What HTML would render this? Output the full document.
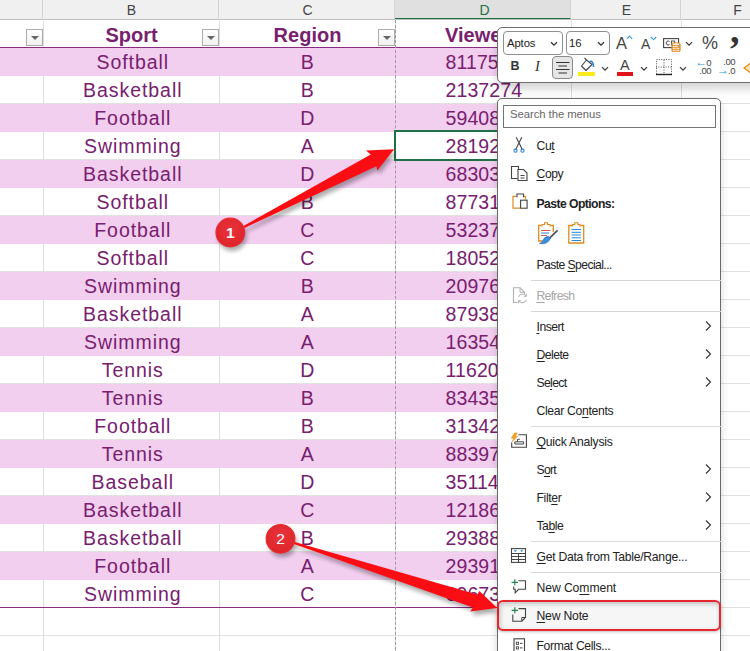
<!DOCTYPE html>
<html><head><meta charset="utf-8"><title>Excel</title>
<style>
*{box-sizing:border-box;margin:0;padding:0}
html,body{width:750px;height:651px;overflow:hidden;background:#fff;font-family:"Liberation Sans",sans-serif}
#sheet{position:absolute;left:0;top:0;width:750px;height:651px;overflow:hidden;background:#fff}
.colhdr{position:absolute;top:0;height:19px;background:#f0f0f0;color:#444;font-size:14px;text-align:center;line-height:21px;padding-left:2px;border-right:1px solid #d4d4d4}
.hline{position:absolute;left:0;width:750px;height:1px;background:#e1e1e1}
.vline{position:absolute;top:19px;width:1px;height:640px;background:#dedede}
.band{position:absolute;left:0;width:571px;height:28px;background:#f2ceef}
.cell{position:absolute;height:28px;line-height:29px;font-size:19.5px;color:#78206e;letter-spacing:.45px;white-space:nowrap}
.c{text-align:center}
.hd{font-weight:bold;font-size:20px;letter-spacing:0;line-height:30px}
.fb{position:absolute;width:17px;height:17px;top:29px;border:1px solid #ababab;background:linear-gradient(#fff,#f1f1f1)}
.fb:after{content:"";position:absolute;left:3.5px;top:6px;border:4px solid transparent;border-top:4px solid #666;border-bottom:0}
.tb{position:absolute;left:497px;top:27px;width:270px;height:56px;background:#fff;border:1px solid #6e6e6e;border-radius:5px;box-shadow:0 6px 8px rgba(0,0,0,.17)}
.menu{position:absolute;left:497px;top:98px;width:224px;height:580px;background:#fff;border:1px solid #6a6a6a;border-radius:5px;box-shadow:0 3px 8px rgba(0,0,0,.16)}
.mi{position:absolute;left:38.5px;font-size:12.2px;color:#222;height:16px;line-height:16px;white-space:nowrap;letter-spacing:-.4px}
.mi u{text-decoration-thickness:1px;text-underline-offset:1.5px}
.sep{position:absolute;left:33px;width:190px;height:1px;background:#d8d8d8}
.chev{position:absolute;left:205px;width:10px;height:12px}
.ico{position:absolute}
.abs{position:absolute}
</style></head><body><div id="sheet">

<div class="colhdr" style="left:0px;width:43px"></div>
<div class="colhdr" style="left:43px;width:176px">B</div>
<div class="colhdr" style="left:219px;width:176px">C</div>
<div class="colhdr" style="left:395px;width:176px;background:#e0e0e0;color:#1f7044;border-bottom:2px solid #1e7145;height:20px;padding-left:4px">D</div>
<div class="colhdr" style="left:571px;width:110px">E</div>
<div class="colhdr" style="left:681px;width:112px">F</div>
<div class="hline" style="top:19px;background:#bdbdbd"></div>
<div class="hline" style="top:47px"></div>
<div class="hline" style="top:75px"></div>
<div class="hline" style="top:103px"></div>
<div class="hline" style="top:131px"></div>
<div class="hline" style="top:159px"></div>
<div class="hline" style="top:187px"></div>
<div class="hline" style="top:215px"></div>
<div class="hline" style="top:243px"></div>
<div class="hline" style="top:271px"></div>
<div class="hline" style="top:299px"></div>
<div class="hline" style="top:327px"></div>
<div class="hline" style="top:355px"></div>
<div class="hline" style="top:383px"></div>
<div class="hline" style="top:411px"></div>
<div class="hline" style="top:439px"></div>
<div class="hline" style="top:467px"></div>
<div class="hline" style="top:495px"></div>
<div class="hline" style="top:523px"></div>
<div class="hline" style="top:551px"></div>
<div class="hline" style="top:579px"></div>
<div class="hline" style="top:607px"></div>
<div class="hline" style="top:635px"></div>
<div class="hline" style="top:663px"></div>
<div class="vline" style="left:43px"></div>
<div class="vline" style="left:219px"></div>
<div class="vline" style="left:395px"></div>
<div class="vline" style="left:571px"></div>
<div class="vline" style="left:681px"></div>
<div class="band" style="top:48px"></div>
<div class="band" style="top:104px"></div>
<div class="band" style="top:160px"></div>
<div class="band" style="top:216px"></div>
<div class="band" style="top:272px"></div>
<div class="band" style="top:328px"></div>
<div class="band" style="top:384px"></div>
<div class="band" style="top:440px"></div>
<div class="band" style="top:496px"></div>
<div class="band" style="top:552px"></div>
<div class="cell c hd" style="left:43px;width:177px;top:20px">Sport</div>
<div class="cell c hd" style="left:219px;width:177px;top:20px">Region</div>
<div class="cell hd" style="left:445px;top:20px">Viewers</div>
<div class="fb" style="left:26px"></div>
<div class="fb" style="left:202px"></div>
<div class="fb" style="left:378px"></div>
<div class="abs" style="left:0;top:46.5px;width:571px;height:1.5px;background:#8a2a80"></div>
<div class="cell c" style="left:43.75px;width:178px;letter-spacing:.95px;top:48px">Softball</div>
<div class="cell c" style="left:219px;width:177px;top:48px">B</div>
<div class="cell" style="left:445.5px;letter-spacing:.1px;top:48px">81175</div>
<div class="cell c" style="left:43.75px;width:178px;letter-spacing:.95px;top:76px">Basketball</div>
<div class="cell c" style="left:219px;width:177px;top:76px">B</div>
<div class="cell" style="left:445.5px;letter-spacing:.1px;top:76px">2137274</div>
<div class="cell c" style="left:43.75px;width:178px;letter-spacing:.95px;top:104px">Football</div>
<div class="cell c" style="left:219px;width:177px;top:104px">D</div>
<div class="cell" style="left:445.5px;letter-spacing:.1px;top:104px">59408</div>
<div class="cell c" style="left:43.75px;width:178px;letter-spacing:.95px;top:132px">Swimming</div>
<div class="cell c" style="left:219px;width:177px;top:132px">A</div>
<div class="cell" style="left:445.5px;letter-spacing:.1px;top:132px">28192</div>
<div class="cell c" style="left:43.75px;width:178px;letter-spacing:.95px;top:160px">Basketball</div>
<div class="cell c" style="left:219px;width:177px;top:160px">D</div>
<div class="cell" style="left:445.5px;letter-spacing:.1px;top:160px">68303</div>
<div class="cell c" style="left:43.75px;width:178px;letter-spacing:.95px;top:188px">Softball</div>
<div class="cell c" style="left:219px;width:177px;top:188px">B</div>
<div class="cell" style="left:445.5px;letter-spacing:.1px;top:188px">87731</div>
<div class="cell c" style="left:43.75px;width:178px;letter-spacing:.95px;top:216px">Football</div>
<div class="cell c" style="left:219px;width:177px;top:216px">C</div>
<div class="cell" style="left:445.5px;letter-spacing:.1px;top:216px">53237</div>
<div class="cell c" style="left:43.75px;width:178px;letter-spacing:.95px;top:244px">Softball</div>
<div class="cell c" style="left:219px;width:177px;top:244px">C</div>
<div class="cell" style="left:445.5px;letter-spacing:.1px;top:244px">18052</div>
<div class="cell c" style="left:43.75px;width:178px;letter-spacing:.95px;top:272px">Swimming</div>
<div class="cell c" style="left:219px;width:177px;top:272px">B</div>
<div class="cell" style="left:445.5px;letter-spacing:.1px;top:272px">20976</div>
<div class="cell c" style="left:43.75px;width:178px;letter-spacing:.95px;top:300px">Basketball</div>
<div class="cell c" style="left:219px;width:177px;top:300px">A</div>
<div class="cell" style="left:445.5px;letter-spacing:.1px;top:300px">87938</div>
<div class="cell c" style="left:43.75px;width:178px;letter-spacing:.95px;top:328px">Swimming</div>
<div class="cell c" style="left:219px;width:177px;top:328px">A</div>
<div class="cell" style="left:445.5px;letter-spacing:.1px;top:328px">16354</div>
<div class="cell c" style="left:43.75px;width:178px;letter-spacing:.95px;top:356px">Tennis</div>
<div class="cell c" style="left:219px;width:177px;top:356px">D</div>
<div class="cell" style="left:445.5px;letter-spacing:.1px;top:356px">11620</div>
<div class="cell c" style="left:43.75px;width:178px;letter-spacing:.95px;top:384px">Tennis</div>
<div class="cell c" style="left:219px;width:177px;top:384px">B</div>
<div class="cell" style="left:445.5px;letter-spacing:.1px;top:384px">83435</div>
<div class="cell c" style="left:43.75px;width:178px;letter-spacing:.95px;top:412px">Football</div>
<div class="cell c" style="left:219px;width:177px;top:412px">B</div>
<div class="cell" style="left:445.5px;letter-spacing:.1px;top:412px">31342</div>
<div class="cell c" style="left:43.75px;width:178px;letter-spacing:.95px;top:440px">Tennis</div>
<div class="cell c" style="left:219px;width:177px;top:440px">A</div>
<div class="cell" style="left:445.5px;letter-spacing:.1px;top:440px">88397</div>
<div class="cell c" style="left:43.75px;width:178px;letter-spacing:.95px;top:468px">Baseball</div>
<div class="cell c" style="left:219px;width:177px;top:468px">D</div>
<div class="cell" style="left:445.5px;letter-spacing:.1px;top:468px">35114</div>
<div class="cell c" style="left:43.75px;width:178px;letter-spacing:.95px;top:496px">Basketball</div>
<div class="cell c" style="left:219px;width:177px;top:496px">C</div>
<div class="cell" style="left:445.5px;letter-spacing:.1px;top:496px">12186</div>
<div class="cell c" style="left:43.75px;width:178px;letter-spacing:.95px;top:524px">Basketball</div>
<div class="cell c" style="left:219px;width:177px;top:524px">B</div>
<div class="cell" style="left:445.5px;letter-spacing:.1px;top:524px">29388</div>
<div class="cell c" style="left:43.75px;width:178px;letter-spacing:.95px;top:552px">Football</div>
<div class="cell c" style="left:219px;width:177px;top:552px">A</div>
<div class="cell" style="left:445.5px;letter-spacing:.1px;top:552px">29391</div>
<div class="cell c" style="left:43.75px;width:178px;letter-spacing:.95px;top:580px">Swimming</div>
<div class="cell c" style="left:219px;width:177px;top:580px">C</div>
<div class="cell" style="left:445.5px;letter-spacing:.1px;top:580px">69673</div>
<div class="abs" style="left:0;top:606.5px;width:571px;height:1.2px;background:#8a2a80"></div>
<div class="abs" style="left:395px;top:20px;width:0;height:640px;border-left:1px dashed #9a9a9a"></div>
<div class="abs" style="left:394px;top:130px;width:178px;height:31px;border:2px solid #1e7145"></div>
</div><!-- mini toolbar -->
<div class="tb">
  <div class="abs" style="left:5px;top:3px;width:60px;height:24px;border:1px solid #8f8f8f;border-radius:4px"></div>
  <div class="abs" style="left:9px;top:7px;font-size:11.3px;color:#222;line-height:16px;letter-spacing:-.1px">Aptos</div>
  <svg class="abs" style="left:52px;top:12.500px" width="8" height="6" viewBox="0 0 8 6"><path d="M1 1.200 L4 4.200 L7 1.200" fill="none" stroke="#333" stroke-width="1.3"/></svg>
  <div class="abs" style="left:68px;top:3px;width:44px;height:24px;border:1px solid #8f8f8f;border-radius:4px"></div>
  <div class="abs" style="left:71px;top:7px;font-size:11.3px;color:#222;line-height:16px">16</div>
  <svg class="abs" style="left:99px;top:12.500px" width="8" height="6" viewBox="0 0 8 6"><path d="M1 1.200 L4 4.200 L7 1.200" fill="none" stroke="#333" stroke-width="1.3"/></svg>
  <div class="abs" style="left:118px;top:4.500px;font-size:16.500px;color:#444;line-height:20px">A</div>
  <svg class="abs" style="left:128px;top:7px" width="7" height="5" viewBox="0 0 7 5"><path d="M.8 3.800 L3.500 1.200 L6.200 3.800" fill="none" stroke="#2b9ad6" stroke-width="1.100"/></svg>
  <div class="abs" style="left:143px;top:6.500px;font-size:14px;color:#444;line-height:18px">A</div>
  <svg class="abs" style="left:152px;top:8px" width="7" height="5" viewBox="0 0 7 5"><path d="M.8 1 L3.500 3.600 L6.200 1" fill="none" stroke="#2b9ad6" stroke-width="1.100"/></svg>
  <!-- accounting icon -->
  <svg class="abs" style="left:165px;top:10px" width="18" height="14" viewBox="0 0 18 14"><rect x=".6" y=".6" width="15" height="9" fill="#fff" stroke="#444" stroke-width="1.100"/><path d="M6.500 3.500 a2 2 0 1 0 0 3" fill="none" stroke="#444" stroke-width="1"/><rect x="8.500" y="3" width="3" height="4" fill="none" stroke="#444" stroke-width=".9"/><path d="M9 8.500 v4 a4 1.400 0 0 0 8 0 v-4" fill="#fff" stroke="#e08a1e" stroke-width="1.100"/><ellipse cx="13" cy="6.300" rx="4" ry="1.500" fill="#fff" stroke="#e08a1e" stroke-width="1.100"/><path d="M9 8.500 a4 1.400 0 0 0 8 0 M9 6.300 v2.200 M17 6.300 v2.200 M9 10.500 a4 1.400 0 0 0 8 0" fill="none" stroke="#e08a1e" stroke-width="1.100"/></svg>
  <svg class="abs" style="left:187px;top:13px" width="8" height="6" viewBox="0 0 8 6"><path d="M1 1.200 L4 4.200 L7 1.200" fill="none" stroke="#333" stroke-width="1.200"/></svg>
  <div class="abs" style="left:204px;top:4px;font-size:18px;color:#444;line-height:22px">%</div>
  <div class="abs" style="left:232px;top:-18px;font-size:38px;font-weight:bold;color:#333;line-height:40px;font-family:'Liberation Serif',serif">,</div>
  <!-- row 2 -->
  <div class="abs" style="left:12.500px;top:30px;font-size:12.500px;font-weight:bold;color:#333;line-height:16px">B</div>
  <div class="abs" style="left:37px;top:29px;font-size:14.500px;font-style:italic;color:#333;line-height:18px;font-family:'Liberation Serif',serif">I</div>
  <div class="abs" style="left:54px;top:28px;width:21px;height:23px;border:1px solid #8a8a8a;border-radius:4px;background:#e6e6e6"></div>
  <svg class="abs" style="left:58px;top:33px" width="14" height="14" viewBox="0 0 14 14"><path d="M0 1.500h13.500M2.500 5h8.500M0 8.500h13.500M2.500 12h8.500" stroke="#333" stroke-width="1"/></svg>
  <!-- fill -->
  <svg class="abs" style="left:80px;top:29px" width="18" height="15" viewBox="0 0 18 15"><path d="M6.500 1 L8.500 3 L3.500 9 L8 13.500 L14 7.500 L8.500 3" fill="#fff" stroke="#444" stroke-width="1.100" stroke-linejoin="round"/><path d="M11.500 4.500 q4 -1 4 5.500" fill="none" stroke="#2b7cd3" stroke-width="1.500"/></svg>
  <div class="abs" style="left:80px;top:44px;width:17px;height:4px;background:#fbea1c"></div>
  <svg class="abs" style="left:103px;top:38px" width="8" height="6" viewBox="0 0 8 6"><path d="M1 1.200 L4 4.200 L7 1.200" fill="none" stroke="#333" stroke-width="1.200"/></svg>
  <div class="abs" style="left:122px;top:29px;font-size:14.500px;color:#444;line-height:16px">A</div>
  <div class="abs" style="left:119px;top:44px;width:16px;height:4px;background:#e0141a"></div>
  <svg class="abs" style="left:142px;top:38px" width="8" height="6" viewBox="0 0 8 6"><path d="M1 1.200 L4 4.200 L7 1.200" fill="none" stroke="#333" stroke-width="1.200"/></svg>
  <!-- borders -->
  <svg class="abs" style="left:158px;top:31px" width="16" height="17" viewBox="0 0 16 17"><rect x=".5" y=".5" width="15" height="15" fill="none" stroke="#555" stroke-dasharray="1 1.400"/><path d="M8 1v15M0 8h16" stroke="#555" stroke-dasharray="1 1.400"/><path d="M0 15.500h16" stroke="#222" stroke-width="1.400"/></svg>
  <svg class="abs" style="left:181px;top:38px" width="8" height="6" viewBox="0 0 8 6"><path d="M1 1.200 L4 4.200 L7 1.200" fill="none" stroke="#333" stroke-width="1.200"/></svg>
  <!-- inc dec -->
  <div class="abs" style="left:193px;top:30px;width:20px;text-align:right;font-size:9.500px;color:#444;line-height:8px;letter-spacing:-.5px"><span style="color:#2b9ad6;font-size:12px;letter-spacing:-1px">&#8592;</span>0<br>.00</div>
  <div class="abs" style="left:216px;top:30px;width:21px;text-align:right;font-size:9.500px;color:#444;line-height:8px;letter-spacing:-.5px">.00<br><span style="color:#2b9ad6;font-size:12px;letter-spacing:-1px">&#8594;</span>.0</div>
  <svg class="abs" style="left:245px;top:32px" width="10" height="16" viewBox="0 0 10 16"><path d="M1 8 L9 2 V14 Z" fill="#fbe3b5" stroke="#e08a1e" stroke-width="1.200"/></svg>
</div>

<!-- context menu -->
<div class="menu">
  <div class="abs" style="left:5px;top:5.500px;width:213px;height:23.500px;border:1px solid #747474;border-radius:0"></div>
  <div class="abs" style="left:12px;top:7px;font-size:11.3px;color:#666;line-height:16px;letter-spacing:-.05px">Search the menus</div>

  <div class="mi" style="top:39px;letter-spacing:-0.39px">Cu<u>t</u></div>
  <div class="mi" style="top:67px;letter-spacing:-0.42px"><u>C</u>opy</div>
  <div class="mi" style="top:96.700px;font-weight:bold;letter-spacing:-0.57px">Paste Options:</div>
  <div class="mi" style="top:158px;letter-spacing:-0.59px">Paste <u>S</u>pecial...</div>
  <div class="sep" style="top:181px"></div>
  <div class="mi" style="top:189px;color:#a6a6a6;letter-spacing:-0.70px"><u>R</u>efresh</div>
  <div class="sep" style="top:212px"></div>
  <div class="mi" style="top:220px;letter-spacing:-0.51px"><u>I</u>nsert</div>
  <div class="mi" style="top:248px;letter-spacing:-0.55px"><u>D</u>elete</div>
  <div class="mi" style="top:276px;letter-spacing:-0.67px">Se<u>l</u>ect</div>
  <div class="mi" style="top:304px;letter-spacing:-0.32px">Clear Co<u>n</u>tents</div>
  <div class="sep" style="top:327px"></div>
  <div class="mi" style="top:335px;letter-spacing:-0.22px"><u>Q</u>uick Analysis</div>
  <div class="mi" style="top:363px;letter-spacing:-0.70px">S<u>o</u>rt</div>
  <div class="mi" style="top:391px;letter-spacing:-0.38px">Filt<u>e</u>r</div>
  <div class="mi" style="top:419px;letter-spacing:-0.48px">Ta<u>b</u>le</div>
  <div class="sep" style="top:442px"></div>
  <div class="mi" style="top:450px;letter-spacing:-0.27px"><u>G</u>et Data from Table/Range...</div>
  <div class="sep" style="top:473px"></div>
  <div class="mi" style="top:481px;letter-spacing:-0.09px">New Co<u>m</u>ment</div>
  <div class="abs" style="left:0;top:502px;width:222px;height:29px;background:#f6f6f6"></div>
  <div class="mi" style="top:509px;letter-spacing:-0.20px"><u>N</u>ew Note</div>
  <div class="mi" style="top:539px;letter-spacing:-0.37px"><u>F</u>ormat Cells...</div>

  <!-- chevrons -->
  <svg class="chev" style="top:221px" viewBox="0 0 10 12"><path d="M3 1.5 L7.5 6 L3 10.5" fill="none" stroke="#333" stroke-width="1.1"/></svg>
  <svg class="chev" style="top:249px" viewBox="0 0 10 12"><path d="M3 1.5 L7.5 6 L3 10.5" fill="none" stroke="#333" stroke-width="1.1"/></svg>
  <svg class="chev" style="top:277px" viewBox="0 0 10 12"><path d="M3 1.5 L7.5 6 L3 10.5" fill="none" stroke="#333" stroke-width="1.1"/></svg>
  <svg class="chev" style="top:364px" viewBox="0 0 10 12"><path d="M3 1.5 L7.5 6 L3 10.5" fill="none" stroke="#333" stroke-width="1.1"/></svg>
  <svg class="chev" style="top:392px" viewBox="0 0 10 12"><path d="M3 1.5 L7.5 6 L3 10.5" fill="none" stroke="#333" stroke-width="1.1"/></svg>
  <svg class="chev" style="top:420px" viewBox="0 0 10 12"><path d="M3 1.5 L7.5 6 L3 10.5" fill="none" stroke="#333" stroke-width="1.1"/></svg>

</div>

<!-- menu icons (page coordinates) -->
<svg class="abs" style="left:0;top:0" width="750" height="651" viewBox="0 0 750 651" fill="none" stroke-linejoin="miter">
  <!-- cut -->
  <path d="M516.200 137.300 L522.300 149.500 M521.800 137.300 L515.700 149.500" stroke="#444" stroke-width="1.100"/>
  <circle cx="515.500" cy="150.700" r="1.600" stroke="#2b86d6" stroke-width="1.100"/><circle cx="522.500" cy="150.700" r="1.600" stroke="#2b86d6" stroke-width="1.100"/>
  <!-- copy -->
  <path d="M517.500 178.500 H511.500 V166.500 H518.500 V169" stroke="#444" stroke-width="1.100"/>
  <path d="M518 169.500 H523.500 L527 173 V180.500 H518 Z" fill="#fff" stroke="#444" stroke-width="1.100"/>
  <path d="M520.500 175.500h4M520.500 178h4" stroke="#444" stroke-width="1"/>
  <!-- paste -->
  <path d="M520 208.200 H513 V196.300 H516.500 M524 196.300 H525.500 V199.500" stroke="#e08a1e" stroke-width="1.200"/>
  <path d="M517 197.200 V194 H523.500 V197.200" stroke="#444" stroke-width="1.100"/>
  <rect x="520.600" y="200.200" width="6.500" height="8" fill="#fff" stroke="#444" stroke-width="1.100"/>
  <!-- paste option 1 -->
  <path d="M541.500 225.500 H538.700 V241 H548 M550.500 225.500 H553.300 V232" stroke="#e08a1e" stroke-width="1.300"/>
  <path d="M542 226.500 V224.500 H544.500 V222.800 H547.500 V224.500 H550 V226.500" stroke="#e08a1e" stroke-width="1.100"/>
  <path d="M541 230.500h9.500M541 235.500h6" stroke="#e0564a" stroke-width="1"/><path d="M541 233h8" stroke="#2b86d6" stroke-width="1"/>
  <path d="M557 230.800 L549.800 237.800" stroke="#555" stroke-width="1.800" stroke-linecap="round"/>
  <path d="M548.500 236.200 q-4.500 .5 -5.500 4.300 q-.8 2 -3.500 3 q7.500 1.500 11 -5 z" fill="#3c8fdc" stroke="#2b74c0" stroke-width=".7"/>
  <!-- paste option 2 -->
  <path d="M572 225.500 H568.800 V243 H583.700 V225.500 H580.500" stroke="#e08a1e" stroke-width="1.300"/>
  <path d="M572.500 226.500 V224.500 H574.800 V222.800 H577.800 V224.500 H580 V226.500" stroke="#e08a1e" stroke-width="1.100"/>
  <path d="M571.500 229.500h9.500M571.500 232.300h9.500M571.500 235h9.500M571.500 237.800h9.500M571.500 240.500h9.500" stroke="#2b86d6" stroke-width="1"/>
  <!-- refresh (disabled) -->
  <path d="M517.500 302.500 H513.500 V287.700 H520 L524.500 292.300 V294" stroke="#b0b0b0" stroke-width="1.100"/>
  <path d="M520 287.700 V292.300 H524.500" stroke="#b0b0b0" stroke-width="1"/>
  <path d="M518.500 297 a4.200 4.200 0 0 1 7.500 -1 M526.300 299.800 a4.200 4.200 0 0 1 -7.500 1.200 M526.300 293.800 v2.500 h-2.500 M518.500 303.200 v-2.500 h2.500" stroke="#b0b0b0" stroke-width="1"/>
  <!-- quick analysis -->
  <path d="M518.500 434.800 H526.400 V447.200 H511.700 V442.500" stroke="#444" stroke-width="1.100"/>
  <path d="M514.800 441.800 H523.600 V444 H514.800 Z M517.500 441.800 V439.300 H519.800" stroke="#444" stroke-width="1"/>
  <path d="M514.500 433 L511.300 438.200 H513.800 L512 441.800 L517.500 436.500 H515 L517.500 433 Z" fill="#f6a11e" stroke="#e08a1e" stroke-width=".5"/>
  <!-- get data -->
  <rect x="511.500" y="548.600" width="14" height="13.800" fill="#fff" stroke="#444" stroke-width="1.100"/>
  <path d="M511.500 553.500h14M511.500 556.500h14M511.500 559.500h14M518.500 553.500v9" stroke="#444" stroke-width="1"/>
  <path d="M513.500 550.200 h3.600 l-1.800 1.900z M520 550.200 h3.600 l-1.800 1.900z" fill="#2b86d6"/>
  <!-- new comment -->
  <path d="M518.500 580.800 H525.500 V589.300 H518.500 L515.200 592.800 V589.300 H513.700 V586.500" stroke="#444" stroke-width="1.100"/>
  <path d="M514.800 579.300 v6 M511.600 582.300 h6.400" stroke="#1e8a4c" stroke-width="1.200"/>
  <!-- new note -->
  <path d="M518.500 608.600 H525.500 V617.500 L521.800 621.200 H512.800 V614.500" stroke="#444" stroke-width="1.100"/>
  <path d="M525.500 617.500 H521.800 V621.200" stroke="#444" stroke-width="1"/>
  <path d="M514.800 607.200 v6 M511.600 610.300 h6.400" stroke="#1e8a4c" stroke-width="1.200"/>
  <!-- format cells -->
  <rect x="514" y="638.800" width="10.500" height="16" fill="#fff" stroke="#444" stroke-width="1.100"/>
  <rect x="516.300" y="642.200" width="2.200" height="2.200" stroke="#444" stroke-width=".9"/><path d="M520 643.300h2.500M520 647.900h2.500" stroke="#444"/>
  <rect x="516.300" y="646.800" width="2.200" height="2.200" stroke="#444" stroke-width=".9"/>
</svg>

<!-- red highlight -->
<div class="abs" style="left:497px;top:600px;width:224px;height:31px;border:2px solid #e8262d;border-radius:6px;box-shadow:inset 1px 2px 5px rgba(0,0,0,.22),0 1px 3px rgba(0,0,0,.25)"></div>

<!-- arrows -->
<svg class="abs" style="left:0;top:0" width="750" height="651" viewBox="0 0 750 651">
  <defs>
    <filter id="sh" x="-10%" y="-10%" width="130%" height="140%"><feGaussianBlur stdDeviation="2.200"/></filter>
    <radialGradient id="rg" cx="50%" cy="40%" r="60%"><stop offset="0" stop-color="#e8333a"/><stop offset="1" stop-color="#de242b"/></radialGradient>
  </defs>
  <g opacity=".32" filter="url(#sh)" transform="translate(2,4)">
    <path d="M243.500 226 L370.800 154.500 L366 150.600 L394.200 149.300 L377.300 170.500 L376.400 166.200 L244.500 228 Z" fill="#000"/>
    <path d="M293 541.500 L477.300 594.500 L479.400 591 L497.200 607.900 L470.300 611.400 L472.900 607.500 L292.500 543.500 Z" fill="#000"/>
    <circle cx="230.300" cy="232.500" r="14.500" fill="#000"/>
    <circle cx="280.500" cy="538.800" r="14.500" fill="#000"/>
  </g>
  <path d="M243.500 226 L370.800 154.500 L366 150.600 L394.200 149.300 L377.300 170.500 L376.400 166.200 L244.500 228 Z" fill="#fb0d14"/>
  <path d="M293 541.500 L477.300 594.500 L479.400 591 L497.200 607.900 L470.300 611.400 L472.900 607.500 L292.500 543.500 Z" fill="#fb0d14"/>
  <circle cx="230.300" cy="232.500" r="14.300" fill="url(#rg)" stroke="#ea2a30" stroke-width="1.200"/>
  <circle cx="280.500" cy="538.800" r="14.300" fill="url(#rg)" stroke="#ea2a30" stroke-width="1.200"/>
  <text x="230.300" y="238" style="font-family:'Liberation Sans',sans-serif;font-weight:bold" font-size="15.500" fill="#fff" text-anchor="middle">1</text>
  <text x="280.500" y="544" style="font-family:'Liberation Sans',sans-serif" font-size="15.500" fill="#fff" text-anchor="middle">2</text>
</svg>
</body></html>
